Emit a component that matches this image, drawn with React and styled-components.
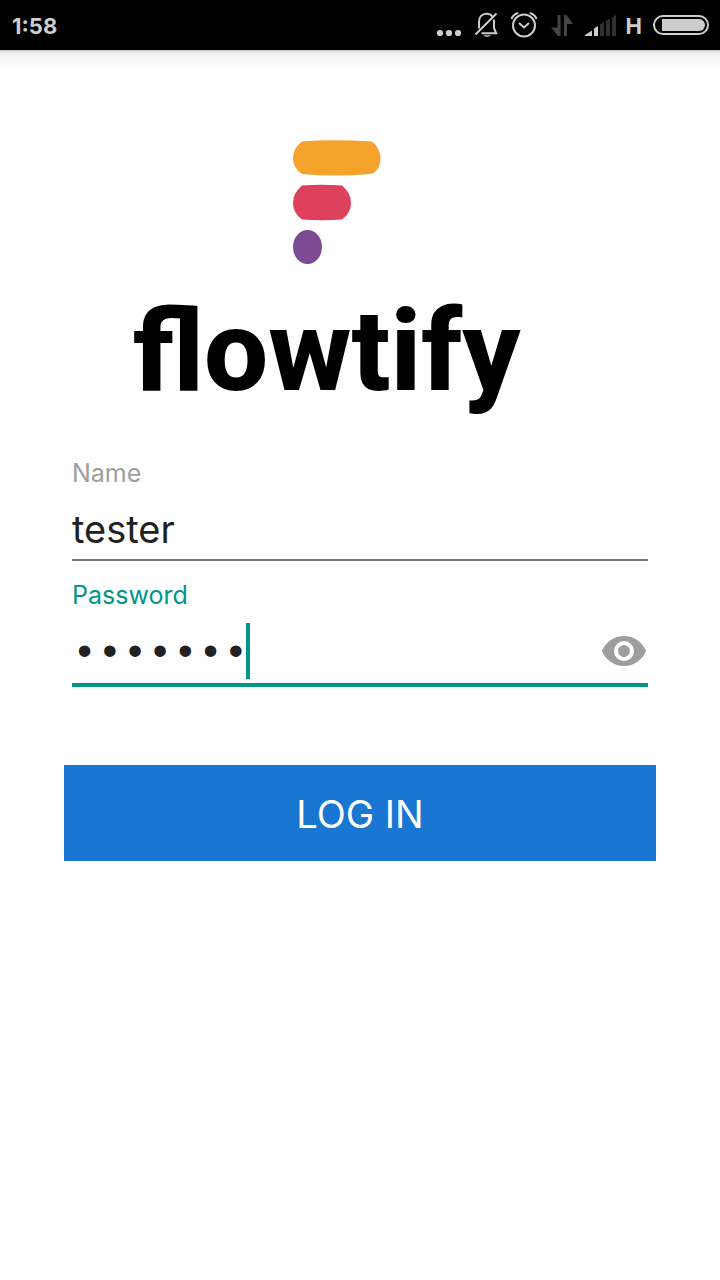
import React, { useState } from "react";
import styled, { createGlobalStyle } from "styled-components";

const GlobalStyle = createGlobalStyle`
  *, *::before, *::after { box-sizing: border-box; }
  body {
    margin: 0;
    background: #fff;
    font-family: Inter, "Liberation Sans", sans-serif;
  }
`;

const Screen = styled.div`
  display: flex;
  flex-direction: column;
  min-height: 100vh;
  background: #fff;
`;

const StatusBar = styled.header`
  display: flex;
  align-items: center;
  justify-content: space-between;
  height: 50px;
  padding: 2px 10px 0 12px;
  background: #000;
  color: #cdcdcd;
  font-size: 22px;
  font-weight: 700;
`;

const StatusIcons = styled.div`
  display: flex;
  align-items: center;
  gap: 10px;

  svg { display: block; }
`;

const BarShadow = styled.div`
  height: 22px;
  background: linear-gradient(#c4c4c4 0, #ececec 2px, #f6f6f6 8px, #fff 100%);
`;

const Content = styled.main`
  display: flex;
  flex-direction: column;
  padding: 0 64px;
`;

const Brand = styled.h1`
  margin: 66px 0 29px;
  font-weight: 400;
  line-height: 0;

  svg { display: block; margin-left: 60px; overflow: visible; }
`;

const Form = styled.form`
  display: flex;
  flex-direction: column;
`;

const Field = styled.div`
  display: flex;
  flex-direction: column;
  margin: 0 8px;
`;

const Label = styled.label`
  font-size: 25px;
  line-height: 32px;
  color: ${(p) => (p.$active ? "#009688" : "#9e9e9e")};
`;

const InputRow = styled.div`
  position: relative;
  display: flex;
  align-items: center;
  height: ${(p) => (p.$active ? "76px" : "72px")};
  margin-bottom: 18px;
  padding-top: ${(p) => (p.$active ? "8px" : "10px")};
  border-bottom: ${(p) => (p.$active ? "4px solid #009688" : "2px solid #757575")};
`;

const Input = styled.input`
  flex: 1;
  min-width: 0;
  height: 56px;
  padding: ${(p) => (p.type === "password" ? "6px 0 0" : "0")};
  border: 0;
  outline: 0;
  background: transparent;
  color: #212121;
  font-family: ${(p) => (p.type === "password" ? '"Liberation Mono", monospace' : "inherit")};
  font-size: ${(p) => (p.type === "password" ? "42px" : "38px")};
  caret-color: transparent;
`;

const Caret = styled.span`
  position: absolute;
  top: 12px;
  left: 174px;
  width: 4px;
  height: 56px;
  background: #009688;
`;

const RevealButton = styled.button`
  display: flex;
  padding: 0;
  border: 0;
  background: none;
  color: #9e9e9e;
`;

const LoginButton = styled.button`
  height: 96px;
  margin-top: 60px;
  padding: 2px 0 0;
  border: 0;
  background: #1976d2;
  color: #fff;
  font-family: inherit;
  font-size: 38px;
  font-weight: 400;
`;

const MoreIcon = () => (
  <svg width="26" height="30" viewBox="0 0 26 30" fill="#cdcdcd" aria-hidden="true">
    <circle cx="4" cy="22" r="3.1" />
    <circle cx="13" cy="22" r="3.1" />
    <circle cx="22" cy="22" r="3.1" />
  </svg>
);

const MutedIcon = () => (
  <svg width="28" height="30" viewBox="0 0 28 30" fill="none" stroke="#cdcdcd" strokeWidth="2" aria-hidden="true">
    <path d="M7 17.500V11C7 6 10 2.700 14.500 2.700c2.600 0 4.600 1 5.800 2.600M22 8.500V17l2.200 5.300H9.500M3.500 23.500 24.500 2.500" />
    <path d="M11 24.300h8q-4 3-8 0" fill="#cdcdcd" stroke="none" />
  </svg>
);

const AlarmIcon = () => (
  <svg width="28" height="30" viewBox="0 0 28 30" fill="none" stroke="#cdcdcd" strokeWidth="2" aria-hidden="true">
    <circle cx="14" cy="14.500" r="11" />
    <path d="m9 12 5 4.500 5-4.500M1.500 8Q3 3.500 8.300 2M26.500 8Q25 3.500 19.700 2" />
  </svg>
);

const DataIcon = () => (
  <svg width="26" height="30" viewBox="-2 0 26 30" fill="#444" aria-hidden="true">
    <path d="M7.500 4h3v21H8L1 16.500h6.500zM14 4h2.500L23 13h-6v12h-3z" />
  </svg>
);

const SignalIcon = () => (
  <svg width="32" height="30" viewBox="-1 0 32 30" aria-hidden="true">
    <path d="M0 25v-1l7-4.500V25zM9 25v-7.500l4-2.500V25z" fill="#cdcdcd" />
    <path d="M15 25V13.500l4-2.500V25zM21 25V10l4-2.500V25zM27 25V6.500L31 4V25z" fill="#303030" />
  </svg>
);

const BatteryIcon = () => (
  <svg width="58" height="22" viewBox="0 0 58 22" aria-hidden="true">
    <rect x="2" y="1" width="54" height="18" rx="9" fill="none" stroke="#cdcdcd" strokeWidth="2" />
    <path d="M10 4h37a6 6 0 0 1 0 12H10z" fill="#cdcdcd" />
  </svg>
);

const FlowtifyLogo = () => (
  <svg width="400" height="290" viewBox="0 0 400 290" role="img" aria-label="flowtify">
    <path d="M178 3.500Q208 1 248 3.500 256 10 256.500 20 256 34 246 36 210 39 178 36 169 30 169 20T178 3.500z" fill="#f6a32b" />
    <path d="M178 47.500Q198 46 218 47.500 227 55 227 65T218 81.500Q198 83 178 81.500 169 75 169 65T178 47.500z" fill="#df405c" />
    <ellipse cx="183.500" cy="109" rx="14.500" ry="17" fill="#7c4b94" />
    <text x="9" y="252" fill="#000" fontFamily="Roboto, sans-serif" fontSize="114" fontWeight="800">
      flowtify
    </text>
  </svg>
);

const EyeIcon = () => (
  <svg width="48" height="48" viewBox="0 0 24 24" fill="currentColor" aria-hidden="true">
    <path d="M12 4.500C7 4.500 2.730 7.610 1 12c1.730 4.390 6 7.500 11 7.500s9.270-3.110 11-7.500c-1.730-4.390-6-7.500-11-7.500zM12 17a5 5 0 1 1 0-10 5 5 0 0 1 0 10zm0-8a3 3 0 1 0 0 6 3 3 0 0 0 0-6z" />
  </svg>
);

export default function App() {
  const [name, setName] = useState("tester");
  const [password, setPassword] = useState("flowtif");
  const [visible, setVisible] = useState(false);

  return (
    <>
      <GlobalStyle />
      <Screen>
        <StatusBar>
          <time>1:58</time>
          <StatusIcons>
            <MoreIcon />
            <MutedIcon />
            <AlarmIcon />
            <DataIcon />
            <SignalIcon />
            <span>H</span>
            <BatteryIcon />
          </StatusIcons>
        </StatusBar>
        <BarShadow />
        <Content>
          <Brand>
            <FlowtifyLogo />
          </Brand>
          <Form onSubmit={(e) => e.preventDefault()}>
            <Field>
              <Label htmlFor="name">Name</Label>
              <InputRow>
                <Input id="name" type="text" value={name} onChange={(e) => setName(e.target.value)} />
              </InputRow>
            </Field>
            <Field>
              <Label htmlFor="password" $active>Password</Label>
              <InputRow $active>
                <Input
                  id="password"
                  type={visible ? "text" : "password"}
                  value={password}
                  onChange={(e) => setPassword(e.target.value)}
                />
                <Caret />
                <RevealButton type="button" aria-label="Show password" onClick={() => setVisible(!visible)}>
                  <EyeIcon />
                </RevealButton>
              </InputRow>
            </Field>
            <LoginButton type="submit">LOG IN</LoginButton>
          </Form>
        </Content>
      </Screen>
    </>
  );
}
